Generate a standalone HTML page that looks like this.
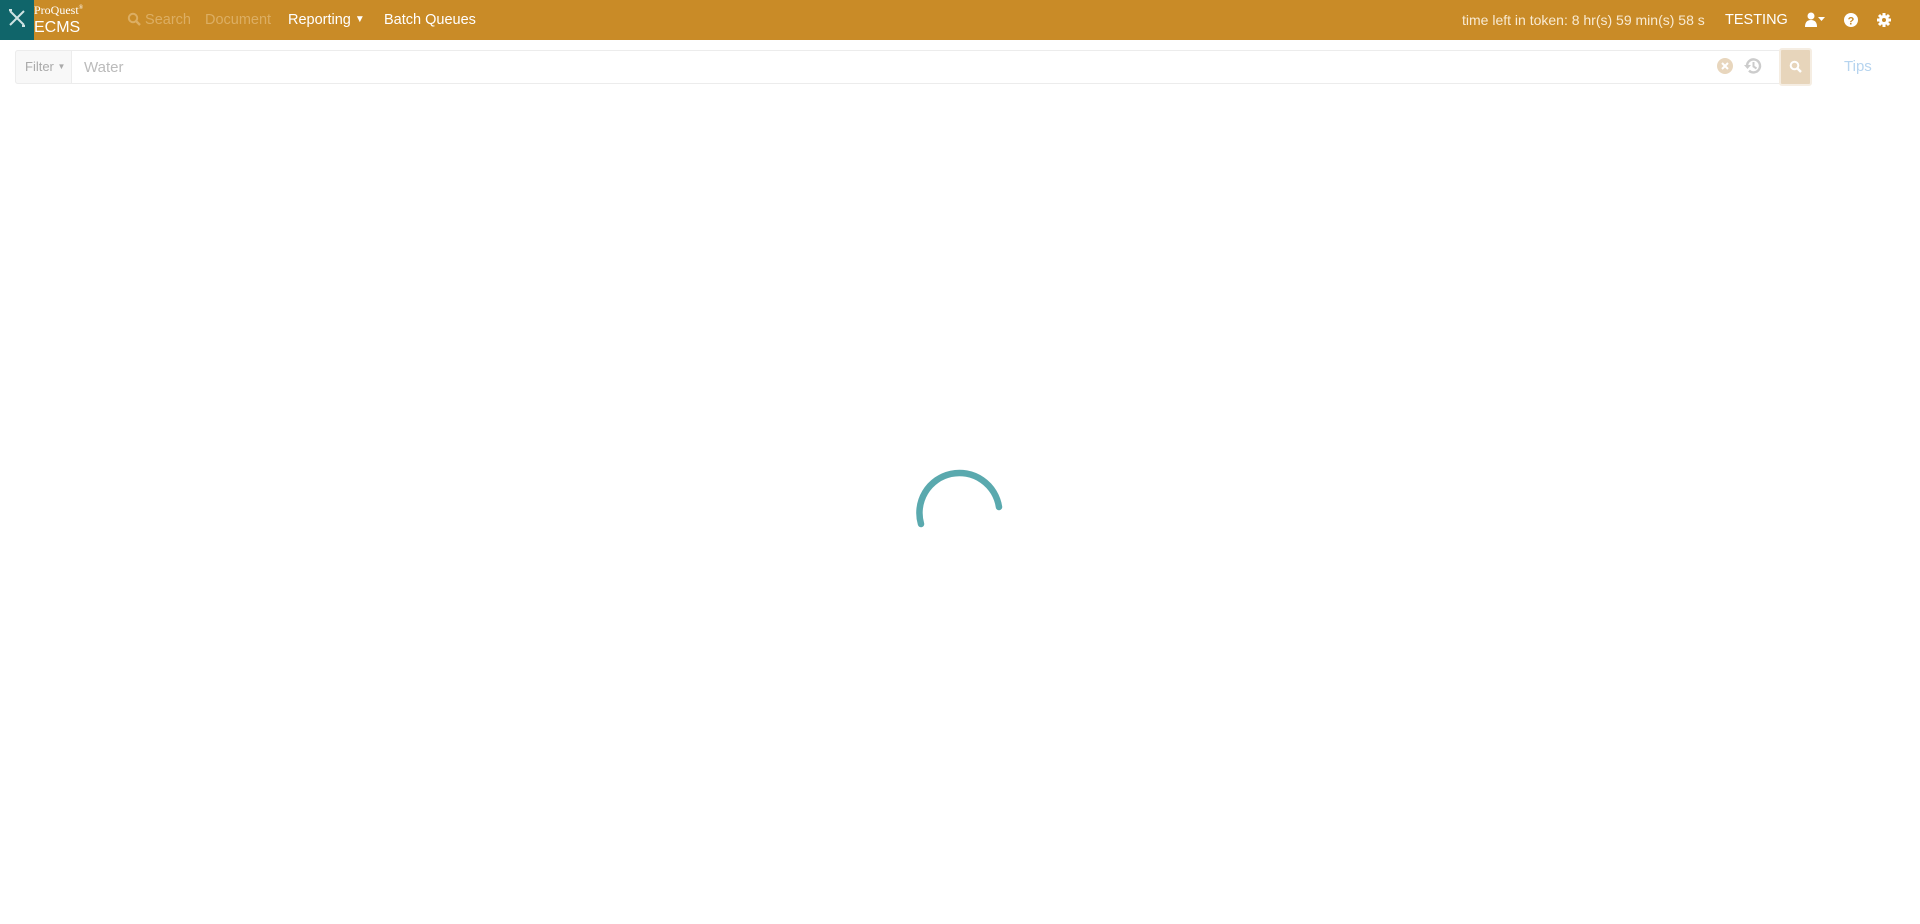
<!DOCTYPE html>
<html><head><meta charset="utf-8"><style>
*{box-sizing:border-box;margin:0;padding:0}
body{width:1920px;height:924px;background:#fff;font-family:"Liberation Sans",sans-serif;position:relative;overflow:hidden}
.hdr{position:absolute;left:0;top:0;width:1920px;height:40px;background:#c98b27;color:#fff}
.logo{position:absolute;left:0;top:0;width:34px;height:40px;background:#10656a}
.t{position:absolute;white-space:nowrap}
</style></head><body>
<div class="hdr">
<div class="logo"><svg width="34" height="40"><g stroke="#cfe3e3" stroke-width="2" fill="none"><path d="M10 11 L24 25 M24 11 L10 25"/><path d="M9 10l3 0M25 26l-3 0"/></g></svg></div>
<div class="t" style="left:34px;top:3px;font-family:'Liberation Serif',serif;font-size:12px">ProQuest<sup style="font-size:6px">®</sup></div>
<div class="t" style="left:34px;top:19px;font-size:16px">ECMS</div>
<div class="t" style="left:127px;top:12px;font-size:14.5px;color:#dcae63"><svg width="14" height="14" style="vertical-align:-2px"><circle cx="6" cy="6" r="4.2" stroke="#dcae63" stroke-width="2" fill="none"/><path d="M9 9l4 4" stroke="#dcae63" stroke-width="2.4"/></svg> Search</div>
<div class="t" style="left:205px;top:12px;font-size:14.5px;color:#dcae63">Document</div>
<div class="t" style="left:288px;top:12px;font-size:14.5px;font-weight:500">Reporting <span style="font-size:10px;vertical-align:2px">&#9660;</span></div>
<div class="t" style="left:384px;top:12px;font-size:14.5px">Batch Queues</div>
<div class="t" style="left:1462px;top:12px;font-size:14px;color:#f8ead2">time left in token: 8 hr(s) 59 min(s) 58 s</div>
<div class="t" style="left:1725px;top:12px;font-size:14.5px">TESTING</div>
<svg class="t" style="left:1805px;top:12px" width="25" height="16"><circle cx="6" cy="4" r="3.5" fill="#fff"/><path d="M0 15 Q0 8 6 8 Q12 8 12 15Z" fill="#fff"/><path d="M13 5h7l-3.5 4z" fill="#fff"/></svg>
<svg class="t" style="left:1843px;top:12px" width="16" height="16"><circle cx="8" cy="8" r="7" fill="#fff"/><text x="8" y="12.5" font-size="11" font-weight="bold" text-anchor="middle" fill="#c98b27" font-family="Liberation Sans">?</text></svg>
<svg class="t" style="left:1876px;top:12px" width="16" height="16"><g fill="#fff"><circle cx="8" cy="8" r="5"/><g stroke="#fff" stroke-width="3"><path d="M8 1v14M1 8h14M3 3l10 10M13 3L3 13"/></g></g><circle cx="8" cy="8" r="2" fill="#c98b27"/></svg>
</div>
<div style="position:absolute;left:15px;top:50px;width:1796px;height:34px;border:1px solid #ececec;border-radius:3px"></div>
<div style="position:absolute;left:15px;top:50px;width:57px;height:34px;background:#f8f8f8;border:1px solid #ececec;border-radius:3px 0 0 3px;color:#aaa;font-size:13px;padding:8px 0 0 9px">Filter <span style="font-size:8px;vertical-align:2px">&#9660;</span></div>
<div class="t" style="left:84px;top:59px;font-size:15px;color:#bbb">Water</div>
<svg class="t" style="left:1717px;top:58px" width="16" height="16"><circle cx="8" cy="8" r="8" fill="#e8d6bd"/><path d="M5 5l6 6M11 5l-6 6" stroke="#fff" stroke-width="2"/></svg>
<svg class="t" style="left:1743px;top:56px" width="20" height="20"><path d="M4 10 A6.5 6.5 0 1 1 6 14.6" stroke="#ccc" stroke-width="2.4" fill="none"/><path d="M1 9l3.5 4 3.5-4z" fill="#ccc"/><path d="M10.5 6v4.5l3 2" stroke="#ccc" stroke-width="2" fill="none"/></svg>
<div style="position:absolute;left:1779px;top:48px;width:33px;height:38px;border:2px solid #f5ede2;border-radius:3px;background:#e7d5bb"></div>
<svg class="t" style="left:1789px;top:60px" width="14" height="14"><circle cx="5.5" cy="5.5" r="3.8" stroke="#fff" stroke-width="2" fill="none"/><path d="M8 8l4 4" stroke="#fff" stroke-width="2.4"/></svg>
<div class="t" style="left:1844px;top:58px;font-size:15px;color:#b6d4ef">Tips</div>
<svg class="t" style="left:900px;top:450px" width="120" height="100"><path d="M21 74 A40 40 0 1 1 99 57" stroke="#5aa9ae" stroke-width="6.5" fill="none" stroke-linecap="round"/></svg>
</body></html>
